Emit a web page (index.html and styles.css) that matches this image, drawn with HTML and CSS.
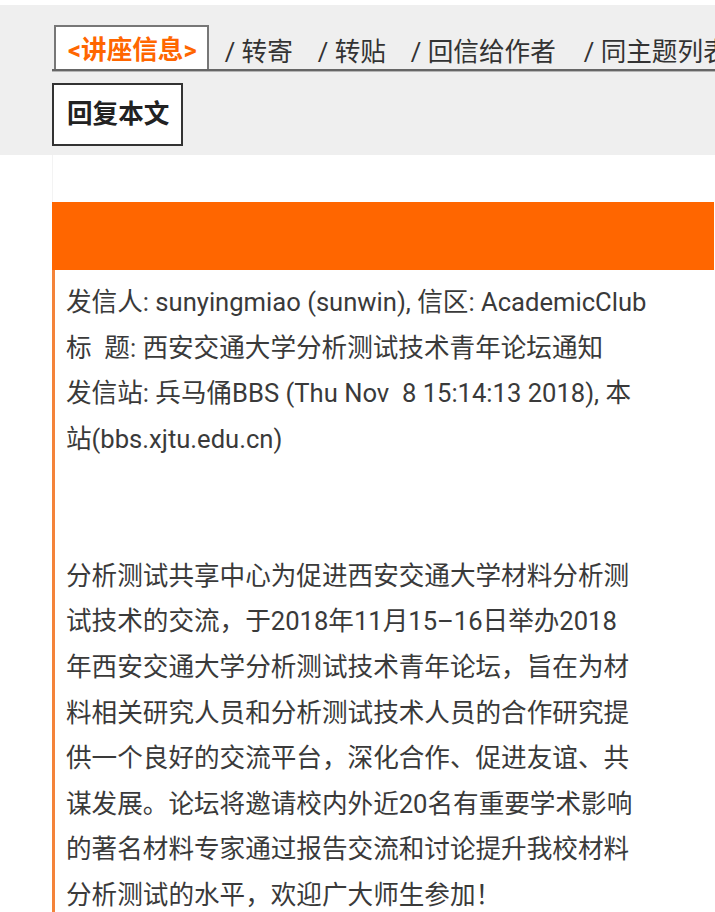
FILE: index.html
```html
<!DOCTYPE html>
<html lang="zh-CN">
<head>
<meta charset="utf-8">
<title>西安交通大学分析测试技术青年论坛通知</title>
<link rel="stylesheet" href="styles.css">
</head>
<body>
<div class="topbar">
  <div class="tabs">
    <span class="tab">&lt;讲座信息&gt;</span>
    <a class="nav-link first">/ 转寄</a>
    <a class="nav-link">/ 转贴</a>
    <a class="nav-link">/ 回信给作者</a>
    <a class="nav-link last">/ 同主题列表</a>
  </div>
  <div class="actions">
    <span class="reply">回复本文</span>
  </div>
</div>
<div class="main">
  <div class="post">
    <div class="post-head"></div>
    <div class="post-body">
      <div class="head-lines">发信人: sunyingmiao (sunwin), 信区: AcademicClub
标  题: 西安交通大学分析测试技术青年论坛通知
发信站: 兵马俑BBS (Thu Nov  8 15:14:13 2018), 本站(bbs.xjtu.edu.cn)</div>
      <div class="body-text">分析测试共享中心为促进西安交通大学材料分析测试技术的交流，于2018年11月15–16日举办2018年西安交通大学分析测试技术青年论坛，旨在为材料相关研究人员和分析测试技术人员的合作研究提供一个良好的交流平台，深化合作、促进友谊、共谋发展。论坛将邀请校内外近20名有重要学术影响的著名材料专家通过报告交流和讨论提升我校材料分析测试的水平，欢迎广大师生参加！</div>
    </div>
  </div>
</div>
</body>
</html>
```
FILE: styles.css
```css
html, body {
  margin: 0;
  padding: 0;
  background: #ffffff;
  overflow-x: hidden;
}
body {
  font-family: Roboto, "Noto Sans CJK SC", sans-serif;
  font-size: 25.6px;
  color: #3a3a3a;
}
.topbar {
  margin-top: 5px;
  background: #efefef;
  padding: 19.5px 0 9.5px 52px;
}
.tabs {
  display: flex;
  align-items: flex-end;
  white-space: nowrap;
  border-bottom: 2px solid #666666;
  box-shadow: 0 1px 0 #b5b5b5;
}
.tab {
  margin-left: 2px;
  background: #ffffff;
  border: 2px solid #777777;
  border-bottom: none;
  padding: 5px 10px 0 12px;
  line-height: 37px;
  font-weight: bold;
  color: #ff6600;
}
.nav-link {
  margin-left: 25px;
  padding-bottom: 1px;
  line-height: 31px;
  color: #333333;
  text-decoration: none;
}
.nav-link.first {
  margin-left: 16px;
}
.nav-link.last {
  margin-left: 28px;
}
.actions {
  margin-top: 12.5px;
  display: flex;
}
.reply {
  background: #ffffff;
  border: 2px solid #333333;
  padding: 7px 12px 7px 13px;
  line-height: 44.8px;
  font-weight: bold;
  color: #222222;
}
.main {
  margin-left: 52px;
  padding-top: 46.5px;
  border-left: 1px solid #f3f3f3;
}
.post {
  margin-left: -1px;
  margin-right: 1px;
}
.post-head {
  height: 68.5px;
  background: #ff6600;
}
.post-body {
  border-left: 3px solid #f4833a;
  padding: 10px 0 20px 11px;
  line-height: 45.6px;
}
.head-lines {
  width: 582px;
  white-space: pre-wrap;
  margin-bottom: 91.2px;
}
.body-text {
  width: 570px;
}
```
